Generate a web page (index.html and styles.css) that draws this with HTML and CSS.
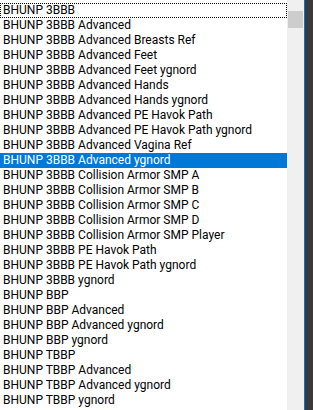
FILE: index.html
```html
<!DOCTYPE html>
<html>
<head>
<meta charset="utf-8">
<link rel="stylesheet" href="styles.css">
</head>
<body>
<div class="frame">
  <div class="listbox">
    <ul class="items">
      <li class="item focus">BHUNP 3BBB</li>
      <li class="item">BHUNP 3BBB Advanced</li>
      <li class="item">BHUNP 3BBB Advanced Breasts Ref</li>
      <li class="item">BHUNP 3BBB Advanced Feet</li>
      <li class="item">BHUNP 3BBB Advanced Feet ygnord</li>
      <li class="item">BHUNP 3BBB Advanced Hands</li>
      <li class="item">BHUNP 3BBB Advanced Hands ygnord</li>
      <li class="item">BHUNP 3BBB Advanced PE Havok Path</li>
      <li class="item">BHUNP 3BBB Advanced PE Havok Path ygnord</li>
      <li class="item">BHUNP 3BBB Advanced Vagina Ref</li>
      <li class="item selected">BHUNP 3BBB Advanced ygnord</li>
      <li class="item">BHUNP 3BBB Collision Armor SMP A</li>
      <li class="item">BHUNP 3BBB Collision Armor SMP B</li>
      <li class="item">BHUNP 3BBB Collision Armor SMP C</li>
      <li class="item">BHUNP 3BBB Collision Armor SMP D</li>
      <li class="item">BHUNP 3BBB Collision Armor SMP Player</li>
      <li class="item">BHUNP 3BBB PE Havok Path</li>
      <li class="item">BHUNP 3BBB PE Havok Path ygnord</li>
      <li class="item">BHUNP 3BBB ygnord</li>
      <li class="item">BHUNP BBP</li>
      <li class="item">BHUNP BBP Advanced</li>
      <li class="item">BHUNP BBP Advanced ygnord</li>
      <li class="item">BHUNP BBP ygnord</li>
      <li class="item">BHUNP TBBP</li>
      <li class="item">BHUNP TBBP Advanced</li>
      <li class="item">BHUNP TBBP Advanced ygnord</li>
      <li class="item">BHUNP TBBP ygnord</li>
    </ul>
  </div>
  <div class="scrollbar">
    <div class="thumb"></div>
  </div>
  <div class="edge"></div>
  <div class="dark"></div>
</div>
</body>
</html>
```
FILE: styles.css
```css
html, body {
  margin: 0;
  padding: 0;
  background: #ffffff;
}
.frame {
  display: flex;
  width: 313px;
  height: 410px;
  overflow: hidden;
}
.listbox {
  width: 287px;
  height: 410px;
  overflow: hidden;
  background: #ffffff;
}
.items {
  list-style: none;
  margin: 0;
  padding: 3px 0 0 0;
}
.item {
  height: 15px;
  line-height: 15px;
  padding-left: 3px;
  font-family: Roboto, "Noto Sans", sans-serif;
  font-size: 12px;
  color: #000000;
  white-space: nowrap;
  box-sizing: border-box;
}
.item.focus {
  outline: 1px dotted #000000;
  outline-offset: -1px;
}
.item.selected {
  background: #0078d7;
  color: #ffffff;
}
.scrollbar {
  width: 17px;
  flex: none;
  background: #f0f0f0;
  padding-top: 11px;
  box-sizing: border-box;
}
.thumb {
  margin: 0 1px;
  height: 17px;
  background: #cdcdcd;
}
.edge {
  width: 1px;
  flex: none;
  background: #0078d7;
}
.dark {
  flex: 1;
  background: #3a3a3a;
}
```
